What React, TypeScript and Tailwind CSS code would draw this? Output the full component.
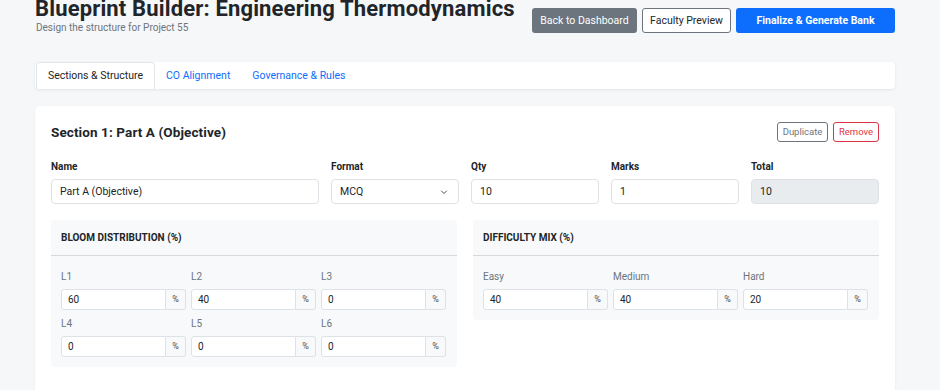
import React from "react";

const font = { fontFamily: 'Roboto, "Noto Sans", sans-serif' };

function PctInput({ value }: { value: string }) {
  return (
    <div className="flex h-[21px] w-full">
      <div className="flex-1 flex items-center pl-[6px] bg-white border border-[#dee2e6] rounded-l-[3px] text-[10px] text-[#212529]">
        {value}
      </div>
      <div className="w-[20px] flex items-center justify-center bg-[#f8f9fa] border border-l-0 border-[#dee2e6] rounded-r-[3px] text-[9px] text-[#495057]">
        %
      </div>
    </div>
  );
}

function PctField({ label, value }: { label: string; value: string }) {
  return (
    <div className="flex flex-col">
      <div className="h-[14px] leading-[14px] text-[10px] text-[#6c757d] mb-[5px]">{label}</div>
      <PctInput value={value} />
    </div>
  );
}

function Panel({ title, items }: { title: string; items: [string, string][] }) {
  return (
    <div className="bg-[#f8f9fa] rounded-[4px]">
      <div className="h-[36px] flex items-center px-[10px] border-b border-[#d6d9dc] text-[10px] font-bold text-[#212529] uppercase">
        {title}
      </div>
      <div className="grid grid-cols-3 gap-x-[5px] gap-y-[7px] pt-[14px] pb-[10px] pl-[10px] pr-[11px]">
        {items.map(([l, v]) => (
          <PctField key={l} label={l} value={v} />
        ))}
      </div>
    </div>
  );
}

function Field({ label, children, span }: { label: string; children: React.ReactNode; span?: boolean }) {
  return (
    <div className={span ? "col-span-2 flex flex-col" : "flex flex-col"}>
      <div className="h-[14px] leading-[14px] text-[10px] font-bold text-[#212529] mb-[5px]">{label}</div>
      {children}
    </div>
  );
}

const inputCls =
  "h-[25px] flex items-center pl-[8px] bg-white border border-[#dee2e6] rounded-[4px] text-[10.5px] text-[#212529]";

export default function App() {
  return (
    <div className="w-[940px] h-[390px] overflow-hidden bg-[#f6f7f9]" style={font}>
      <div className="ml-[35px] w-[860px]">
        <div className="flex justify-between">
          <div className="mt-[-4px] whitespace-nowrap">
            <div className="text-[22px] leading-[26px] font-bold text-[#212529] tracking-[0.15px]">
              Blueprint Builder: Engineering Thermodynamics
            </div>
            <div className="text-[10px] leading-[11px] text-[#6c757d] ml-[1px]">Design the structure for Project 55</div>
          </div>
          <div className="flex gap-[5px] mt-[8px] h-[25px] shrink-0 whitespace-nowrap">
            <div className="w-[105px] flex items-center justify-center rounded-[3px] bg-[#6c757d] text-white text-[10.5px]">Back to Dashboard</div>
            <div className="w-[89px] flex items-center justify-center rounded-[3px] bg-white border border-[#6c757d] text-[#212529] text-[10.5px]">
              Faculty Preview
            </div>
            <div className="w-[159px] flex items-center justify-center rounded-[3px] bg-[#0d6efd] text-white text-[10.5px] font-bold">
              Finalize &amp; Generate Bank
            </div>
          </div>
        </div>

        <div className="mt-[29px] h-[27px] bg-white rounded-[4px] shadow-[0_1px_3px_rgba(0,0,0,0.08)] flex px-[1px] whitespace-nowrap">
          <div className="h-full flex items-center px-[11px] border border-b-0 border-[#e3e6e9] rounded-t-[4px] text-[10.5px] text-[#212529]">
            Sections &amp; Structure
          </div>
          <div className="h-full flex items-center px-[11px] text-[10.5px] text-[#0d6efd]">CO Alignment</div>
          <div className="h-full flex items-center px-[11px] text-[10.5px] text-[#0d6efd]">Governance &amp; Rules</div>
        </div>

        <div className="mt-[17px] bg-white rounded-[5px] shadow-[0_1px_3px_rgba(0,0,0,0.06)] pt-[16px] pl-[16px] pr-[16px] pb-[40px]">
          <div className="flex justify-between items-center h-[20px]">
            <div className="text-[13.5px] font-bold text-[#212529] tracking-[0.1px]">Section 1: Part A (Objective)</div>
            <div className="flex gap-[5px] h-[20px]">
              <div className="w-[51px] flex items-center justify-center border border-[#6c757d] rounded-[3px] text-[9.5px] text-[#6c757d]">Duplicate</div>
              <div className="w-[46px] flex items-center justify-center border border-[#dc3545] rounded-[3px] text-[9.5px] text-[#dc3545]">Remove</div>
            </div>
          </div>

          <div className="grid grid-cols-6 gap-x-[12px] mt-[18px]">
            <Field label="Name" span>
              <div className={inputCls}>Part A (Objective)</div>
            </Field>
            <Field label="Format">
              <div className={inputCls + " justify-between pr-[10px]"}>
                <span>MCQ</span>
                <svg width="8" height="8" viewBox="0 0 16 16" fill="none" stroke="#495057" strokeWidth="2" strokeLinecap="round" strokeLinejoin="round">
                  <path d="M3 6l5 5 5-5" />
                </svg>
              </div>
            </Field>
            <Field label="Qty">
              <div className={inputCls}>10</div>
            </Field>
            <Field label="Marks">
              <div className={inputCls}>1</div>
            </Field>
            <Field label="Total">
              <div className={inputCls.replace("bg-white", "bg-[#e9ecef]")}>10</div>
            </Field>
          </div>

          <div className="grid grid-cols-2 gap-x-[16px] mt-[16px] items-start">
            <Panel
              title="Bloom Distribution (%)"
              items={[
                ["L1", "60"],
                ["L2", "40"],
                ["L3", "0"],
                ["L4", "0"],
                ["L5", "0"],
                ["L6", "0"],
              ]}
            />
            <Panel
              title="Difficulty Mix (%)"
              items={[
                ["Easy", "40"],
                ["Medium", "40"],
                ["Hard", "20"],
              ]}
            />
          </div>
        </div>
      </div>
    </div>
  );
}
